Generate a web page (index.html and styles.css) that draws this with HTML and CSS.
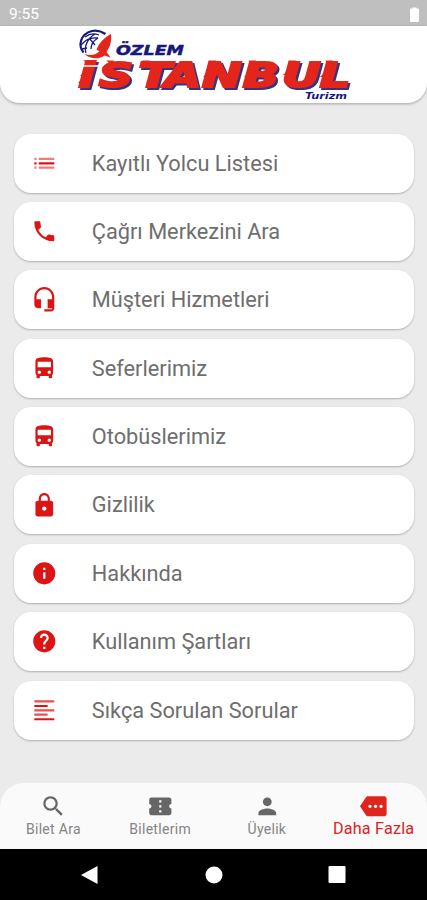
FILE: index.html
```html
<!DOCTYPE html>
<html lang="tr">
<head>
<meta charset="utf-8">
<meta name="viewport" content="width=device-width, initial-scale=1">
<title>Özlem İstanbul Turizm</title>
<link rel="stylesheet" href="styles.css">
</head>
<body>
<div class="status"><span>9:55</span>
<svg class="battery" viewBox="0 0 9 15"><path d="M2.500 1.500V.5h4v1H8a1 1 0 0 1 1 1V14a1 1 0 0 1-1 1H1a1 1 0 0 1-1-1V2.500a1 1 0 0 1 1-1z"/></svg></div>
<header class="header">
<svg class="logo" viewBox="0 0 280 76">
  <g fill="none" stroke="#17187c">
    <path stroke-width="2.200" d="M9.500 26.500C4 20 6 8 18 5c5-1 9 0 13.500 3"/>
    <path stroke-width="1.300" d="M11 11c4-3 9-4 14-2M7 19c4-5 10-8 17-7M12 27c-2-6 1-14 9-19M8 23l5-1M15 12l6 7M17 23c0-4 2-8 7-11"/>
  </g>
  <path fill="#e4251b" d="M37 8c1 7-1 13-4.500 18l4 5.500-6-2c-5 4-14 4-20-1.500 6 2 12 1 15-3l-3-1c2-6 7-12 14.500-16z"/>
  <g class="logo-small"><text x="42" y="29" textLength="68" lengthAdjust="spacingAndGlyphs">ÖZLEM</text></g>
  <g class="logo-main">
    <text transform="scale(1.4 1)" x="3 17.600 46 64.500 91.500 120.500 148.500 175.500" y="61">iSTANBUL</text>
    <path d="M17 34.500H9l6 4zM40 34.500h-8l6 4zM76 34.500h-8l5 4zM142 34.500h-8l7 4zM182 34.500h-8l7 4zM222 34.500h-8l7 4zM259 34.500h-8l7 4zM10 46l-4 4h5zM8 53l-4 4h5zM79 47l-4 4h5zM133 47l-4 4h5zM174 47l-4 4h5zM213 45l-4 4h5zM250 47l-4 4h5z"/>
  </g>
  <path d="M9 40h18" stroke="#fff" stroke-width="1.500"/>
  <g class="logo-tag"><text x="231" y="73" textLength="42" lengthAdjust="spacingAndGlyphs">Turizm</text></g>
</svg>
</header>
<main class="list">
<a class="card"><svg class="icon" viewBox="0 0 24 24"><path opacity=".55" d="M3 7h2v2H3zM7 7h14v2H7zM3 15h2v2H3zM7 15h14v2H7z"/><path d="M3 11h2v2H3zM7 11h14v2H7z"/></svg><span>Kayıtlı Yolcu Listesi</span></a>
<a class="card"><svg class="icon" viewBox="0 0 24 24"><path d="M6.620 10.790c1.440 2.830 3.760 5.140 6.590 6.590l2.200-2.200c.27-.27.67-.36 1.020-.24 1.120.37 2.330.57 3.570.57.55 0 1 .45 1 1V20c0 .55-.45 1-1 1C10.610 21 3 13.390 3 4c0-.55.45-1 1-1h3.500c.55 0 1 .45 1 1 0 1.250.2 2.450.57 3.570.11.35.03.74-.25 1.020z"/></svg><span>Çağrı Merkezini Ara</span></a>
<a class="card"><svg class="icon" viewBox="0 0 24 24"><path d="M12 1c-4.970 0-9 4.030-9 9v7c0 1.660 1.340 3 3 3h3v-8H5v-2c0-3.870 3.130-7 7-7s7 3.130 7 7v2h-4v8h4v1h-7v2h6c1.660 0 3-1.340 3-3V10c0-4.970-4.030-9-9-9z"/></svg><span>Müşteri Hizmetleri</span></a>
<a class="card"><svg class="icon" viewBox="0 0 24 24"><path d="M4 16c0 .88.39 1.670 1 2.220V20c0 .55.45 1 1 1h1c.55 0 1-.45 1-1v-1h8v1c0 .55.45 1 1 1h1c.55 0 1-.45 1-1v-1.780c.61-.55 1-1.340 1-2.220V6c0-3.500-3.580-4-8-4s-8 .5-8 4zm3.500 1c-.83 0-1.500-.67-1.500-1.500S6.670 14 7.500 14s1.500.67 1.500 1.500S8.330 17 7.500 17zm9 0c-.83 0-1.500-.67-1.500-1.500s.67-1.500 1.500-1.500 1.500.67 1.500 1.500-.67 1.500-1.500 1.500zm1.500-6H6V6h12z"/></svg><span>Seferlerimiz</span></a>
<a class="card"><svg class="icon" viewBox="0 0 24 24"><path d="M4 16c0 .88.39 1.670 1 2.220V20c0 .55.45 1 1 1h1c.55 0 1-.45 1-1v-1h8v1c0 .55.45 1 1 1h1c.55 0 1-.45 1-1v-1.780c.61-.55 1-1.340 1-2.220V6c0-3.500-3.580-4-8-4s-8 .5-8 4zm3.500 1c-.83 0-1.500-.67-1.500-1.500S6.670 14 7.500 14s1.500.67 1.500 1.500S8.330 17 7.500 17zm9 0c-.83 0-1.500-.67-1.500-1.500s.67-1.500 1.500-1.500 1.500.67 1.500 1.500-.67 1.500-1.500 1.500zm1.500-6H6V6h12z"/></svg><span>Otobüslerimiz</span></a>
<a class="card"><svg class="icon" viewBox="0 0 24 24"><path d="M18 8h-1V6c0-2.760-2.240-5-5-5S7 3.240 7 6v2H6c-1.100 0-2 .9-2 2v10c0 1.100.9 2 2 2h12c1.100 0 2-.9 2-2V10c0-1.100-.9-2-2-2zm-6 9c-1.100 0-2-.9-2-2s.9-2 2-2 2 .9 2 2-.9 2-2 2zm3.100-9H8.900V6c0-1.710 1.390-3.100 3.100-3.100s3.100 1.390 3.100 3.100z"/></svg><span>Gizlilik</span></a>
<a class="card"><svg class="icon" viewBox="0 0 24 24"><path d="M12 2C6.480 2 2 6.480 2 12s4.480 10 10 10 10-4.480 10-10S17.520 2 12 2zm1 15h-2v-6h2zm0-8h-2V7h2z"/></svg><span>Hakkında</span></a>
<a class="card"><svg class="icon" viewBox="0 0 24 24"><path d="M12 2C6.480 2 2 6.480 2 12s4.480 10 10 10 10-4.480 10-10S17.520 2 12 2zm1 17h-2v-2h2zm2.070-7.750-.9.920C13.450 12.900 13 13.500 13 15h-2v-.5c0-1.100.45-2.100 1.170-2.830l1.240-1.260c.37-.36.59-.86.59-1.410 0-1.100-.9-2-2-2s-2 .9-2 2H8c0-2.210 1.790-4 4-4s4 1.790 4 4c0 .88-.36 1.680-.93 2.250z"/></svg><span>Kullanım Şartları</span></a>
<a class="card"><svg class="icon" viewBox="0 0 24 24"><path opacity=".75" d="M3 3h18v2H3zM3 11h18v2H3zM3 15h12v2H3z"/><path d="M3 7.300h12v1.700H3zM3 19.200h18V21H3z"/></svg><span>Sıkça Sorulan Sorular</span></a>
</main>
<nav class="tabs">
<a class="tab"><svg class="icon" viewBox="0 0 24 24"><path d="M15.500 14h-.79l-.28-.27C15.410 12.590 16 11.110 16 9.500 16 5.910 13.090 3 9.500 3S3 5.910 3 9.500 5.910 16 9.500 16c1.610 0 3.090-.59 4.230-1.570l.27.28v.79l5 4.990L20.490 19zm-6 0C7.010 14 5 11.990 5 9.500S7.010 5 9.500 5 14 7.010 14 9.500 11.990 14 9.500 14z"/></svg><span>Bilet Ara</span></a>
<a class="tab"><svg class="icon" viewBox="0 0 24 24"><path d="M22 10V6c0-1.110-.9-2-2-2H4c-1.100 0-1.990.89-1.990 2v4c1.100 0 1.990.9 1.990 2s-.89 2-2 2v4c0 1.100.9 2 2 2h16c1.100 0 2-.9 2-2v-4c-1.100 0-2-.9-2-2s.9-2 2-2zm-9 7.500h-2v-2h2zm0-4.500h-2v-2h2zm0-4.500h-2v-2h2z"/></svg><span>Biletlerim</span></a>
<a class="tab"><svg class="icon" viewBox="0 0 24 24"><path d="M12 12c2.210 0 4-1.790 4-4s-1.790-4-4-4-4 1.790-4 4 1.790 4 4 4zm0 2c-2.670 0-8 1.340-8 4v2h16v-2c0-2.660-5.330-4-8-4z"/></svg><span>Üyelik</span></a>
<a class="tab active"><svg class="icon" viewBox="0 0 24 24"><path d="M22 3H7c-.69 0-1.230.35-1.590.88L0 12l5.410 8.110c.36.53.97.89 1.660.89H22c1.100 0 2-.9 2-2V5c0-1.100-.9-2-2-2zM9 13.500c-.83 0-1.500-.67-1.500-1.500s.67-1.500 1.500-1.500 1.500.67 1.500 1.500-.67 1.500-1.500 1.500zm5 0c-.83 0-1.500-.67-1.500-1.500s.67-1.500 1.500-1.500 1.500.67 1.500 1.500-.67 1.500-1.500 1.500zm5 0c-.83 0-1.500-.67-1.500-1.500s.67-1.500 1.500-1.500 1.500.67 1.500 1.500-.67 1.500-1.500 1.500z"/></svg><span>Daha Fazla</span></a>
</nav>
<footer class="system">
<svg viewBox="0 0 20 20"><path d="M1 10 17.500 1v18z"/></svg>
<svg viewBox="0 0 20 20"><circle cx="10" cy="10" r="8.500"/></svg>
<svg viewBox="0 0 20 20"><rect x="1.500" y="1" width="17" height="17" rx="1"/></svg>
</footer>
</body>
</html>
```
FILE: styles.css
```css
* { box-sizing: border-box; }
body {
  margin: 0;
  height: 900px;
  display: flex;
  flex-direction: column;
  overflow: hidden;
  background: #ebebeb;
  font-family: Roboto, "Liberation Sans", sans-serif;
}
.status {
  height: 26px;
  flex: none;
  display: flex;
  align-items: center;
  justify-content: space-between;
  padding: 2px 8px 0 9px;
  background: #bfbfbf;
  color: #fff;
  font-size: 15.500px;
}
.battery { width: 9px; height: 15px; fill: #fff; }
.header {
  height: 77px;
  flex: none;
  display: flex;
  justify-content: center;
  background: #fff;
  border-radius: 0 0 20px 20px;
  box-shadow: 0 1px 3px rgba(0, 0, 0, .3);
}
.logo { width: 280px; height: 76px; }
.logo text {
  font-family: "DejaVu Sans", sans-serif;
  font-weight: bold;
  font-style: italic;
}
.logo-small { font-size: 14px; fill: #17187c; stroke: #17187c; stroke-width: .5; }
.logo-main { fill: #e4251b; filter: drop-shadow(2.500px 2.500px 0 #34357f); }
.logo-main text { font-size: 34px; stroke: #e4251b; stroke-width: 2.200; }
.logo-tag { font-size: 8.500px; fill: #17187c; }
.list {
  flex: 1;
  display: flex;
  flex-direction: column;
  gap: 9.400px;
  padding: 30.500px 13px 0 14px;
}
.card {
  height: 59px;
  flex: none;
  display: flex;
  align-items: center;
  gap: 34.500px;
  padding: 0 16.700px;
  background: #fff;
  border-radius: 17px;
  box-shadow: 0 1px 2px rgba(0, 0, 0, .25);
  color: #6e6e6e;
  font-size: 21.750px;
  white-space: nowrap;
}
.icon { width: 26.600px; height: 26.600px; flex: none; fill: #dc1414; }
.tabs {
  height: 66px;
  flex: none;
  display: grid;
  grid-template-columns: repeat(4, 1fr);
  background: #fafafa;
  border-radius: 24px 24px 0 0;
}
.tab {
  display: flex;
  flex-direction: column;
  align-items: center;
  padding-top: 9.500px;
  color: #848484;
  font-size: 14px;
  letter-spacing: .3px;
  line-height: 21px;
  white-space: nowrap;
}
.tab .icon { fill: #666; }
.tab.active { color: #dc2323; font-size: 16.200px; letter-spacing: .2px; line-height: 19px; }
.tab.active .icon { fill: #e0261c; }
.system {
  height: 51px;
  flex: none;
  display: flex;
  justify-content: space-between;
  align-items: center;
  padding: 0 80px;
  background: #000;
}
.system svg { width: 20px; height: 20px; fill: #fff; }
```
